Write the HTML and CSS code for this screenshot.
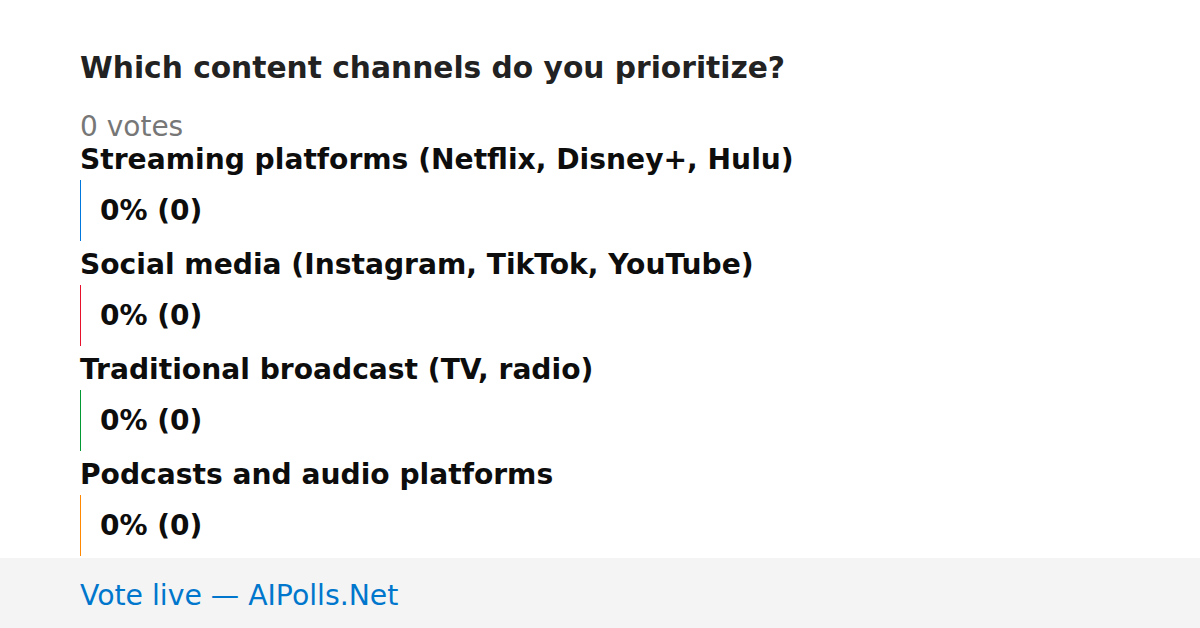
FILE: index.html
```html
<!DOCTYPE html>
<html>
<head>
    <title>Poll</title>
    <link rel="stylesheet" href="styles.css">
</head>
<body>
    <div class="poll">
        <h1 class="titulo">Which content channels do you prioritize?</h1>
        <div class="votos">0 votes</div>
        <div class="opcoes">
            <div class="opcao">
                <div class="rotulo">Streaming platforms (Netflix, Disney+, Hulu)</div>
                <div class="barra azul">0% (0)</div>
            </div>
            <div class="opcao">
                <div class="rotulo">Social media (Instagram, TikTok, YouTube)</div>
                <div class="barra vermelha">0% (0)</div>
            </div>
            <div class="opcao">
                <div class="rotulo">Traditional broadcast (TV, radio)</div>
                <div class="barra verde">0% (0)</div>
            </div>
            <div class="opcao">
                <div class="rotulo">Podcasts and audio platforms</div>
                <div class="barra laranja">0% (0)</div>
            </div>
        </div>
    </div>
    <div class="rodape">Vote live — AIPolls.Net</div>
</body>
</html>
```

FILE: styles.css
```css
body {
    margin: 0;
    background: white;
    font-family: "DejaVu Sans", sans-serif;
    height: 628px;
    display: flex;
    flex-direction: column;
    overflow: hidden;
}
.poll {
    flex: 1;
    padding: 50px 80px 0 80px;
}
.titulo {
    margin: 0;
    font-size: 29.7px;
    line-height: 36px;
    color: #222;
}
.votos {
    margin-top: 28px;
    font-size: 28px;
    line-height: 25px;
    color: #777;
}
.opcao + .opcao {
    margin-top: 3px;
}
.rotulo {
    padding-top: 4px;
    font-size: 28.15px;
    font-weight: bold;
    line-height: 34px;
    color: #0d0d0d;
}
.barra {
    margin-top: 3px;
    height: 61px;
    box-sizing: border-box;
    border-left: 1px solid;
    padding-left: 19px;
    display: flex;
    align-items: center;
    font-size: 28px;
    font-weight: bold;
    color: #0d0d0d;
}
.azul { border-color: #0077dd; }
.vermelha { border-color: #e8112d; }
.verde { border-color: #009933; }
.laranja { border-color: #ff8800; }
.rodape {
    flex: none;
    height: 70px;
    box-sizing: border-box;
    background: #f4f4f4;
    padding: 4px 80px 0 80px;
    display: flex;
    align-items: center;
    font-size: 28.3px;
    color: #0077cc;
}
```
